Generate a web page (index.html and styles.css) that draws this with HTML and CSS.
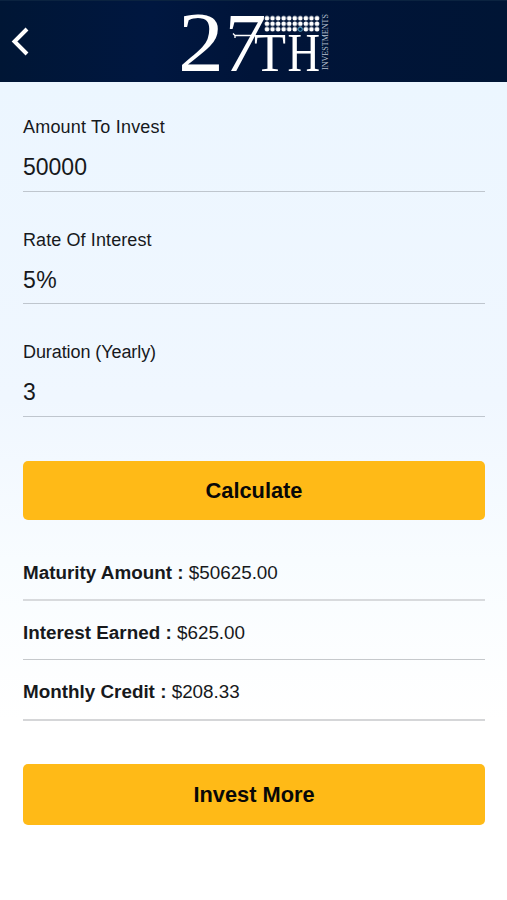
FILE: index.html
```html
<!DOCTYPE html>
<html lang="en">
<head>
<meta charset="utf-8">
<title>27th Investments</title>
<link rel="stylesheet" href="styles.css">
</head>
<body>
<header class="topbar">
  <svg class="back" viewBox="0 0 20 30" aria-label="Back"><path d="M17 3 4.500 15.500 17 28"/></svg>
  <svg class="logo" viewBox="180 1 152 81">
    <defs>
      <pattern id="dots" x="264.2" y="15.5" width="5.56" height="5.5" patternUnits="userSpaceOnUse"><circle cx="2.78" cy="2.75" r="2.3" fill="#fff"/></pattern>
    </defs>
    <text x="178" y="70.500" font-size="84" textLength="46" lengthAdjust="spacingAndGlyphs">2</text>
    <text transform="translate(221.500 70.500) skewX(-4)" font-size="84" textLength="41" lengthAdjust="spacingAndGlyphs">7</text>
    <text x="254" y="70.500" font-size="54" textLength="32" lengthAdjust="spacingAndGlyphs">T</text>
    <text x="287.500" y="70.500" font-size="54" textLength="32.500" lengthAdjust="spacingAndGlyphs">H</text>
    <path class="bar" d="M233 33.500 235 35.500H256M235 35V38"/>
    <rect x="264.200" y="15.500" width="55.600" height="16.500" fill="url(#dots)"/>
    <circle class="accent" cx="300.300" cy="29.300" r="1.900"/>
    <text class="side" transform="translate(328 70) rotate(-90)" font-size="9" textLength="56" lengthAdjust="spacingAndGlyphs">INVESTMENTS</text>
  </svg>
</header>
<main class="content">
  <div class="field"><label>Amount To Invest</label><div class="value">50000</div></div>
  <div class="field"><label class="mid">Rate Of Interest</label><div class="value rate">5%</div></div>
  <div class="field last"><label class="tight">Duration (Yearly)</label><div class="value">3</div></div>
  <button class="btn">Calculate</button>
  <div class="results">
    <div class="row"><b>Maturity Amount :</b> $50625.00</div>
    <div class="row"><b>Interest Earned :</b> $625.00</div>
    <div class="row"><b>Monthly Credit :</b> $208.33</div>
  </div>
  <button class="btn more">Invest More</button>
</main>
</body>
</html>
```
FILE: styles.css
```css
* { box-sizing: border-box; }
body {
  margin: 0;
  min-height: 900px;
  font-family: "Liberation Sans", Arial, sans-serif;
  color: #17191c;
  background: linear-gradient(#ecf6ff 82px, #f0f7ff 400px, #f8fcff 560px, #fff 720px);
}
.topbar {
  height: 82px;
  display: grid;
  grid-template-columns: 180px 152px;
  background: linear-gradient(90deg, #001635, #001740 30%, #001439 50%, #001535);
  border-top: 1px solid #0b2340;
}
.back {
  width: 20px;
  height: 30px;
  margin: 25px 0 0 10px;
  fill: none;
  stroke: #fff;
  stroke-width: 4;
}
.logo {
  width: 152px;
  height: 81px;
  overflow: visible;
  font-family: "Liberation Serif", serif;
  fill: #fff;
}
.bar { fill: none; stroke: #fff; stroke-width: 1.3; }
.accent { fill: #001d49; stroke: #2a84ad; stroke-width: 1; }
.side { fill: #b9c3d3; }
.content { padding: 0 22px 0 23px; }
.field { height: 112px; padding-top: 37px; border-bottom: 1px solid #bfc6ce; }
.field:first-child { height: 110px; padding-top: 34px; }
.field.last { height: 113px; }
label { display: block; font-size: 18px; line-height: 22px; letter-spacing: 0.2px; }
.mid { letter-spacing: 0.1px; }
.tight { letter-spacing: -0.08px; }
.value { margin-top: 14px; font-size: 23px; line-height: 30px; }
.rate { letter-spacing: 0.5px; }
.btn {
  display: block;
  width: 100%;
  height: 59px;
  margin-top: 44px;
  padding: 0;
  border: 0;
  border-radius: 5px;
  background: #ffba17;
  color: #080808;
  font: bold 21.8px/59px "Liberation Sans", Arial, sans-serif;
}
.results { padding-top: 21px; }
.row {
  height: 59px;
  padding-top: 19px;
  border-bottom: 1px solid #c6c9cc;
  font-size: 18.85px;
  line-height: 26px;
}
.row:first-child { height: 60px; border-bottom: 2px solid #d8dadd; }
.row:last-child { height: 61px; border-bottom: 2px solid #d5d6d8; }
.more { height: 61px; line-height: 61px; margin-top: 43px; }
```
